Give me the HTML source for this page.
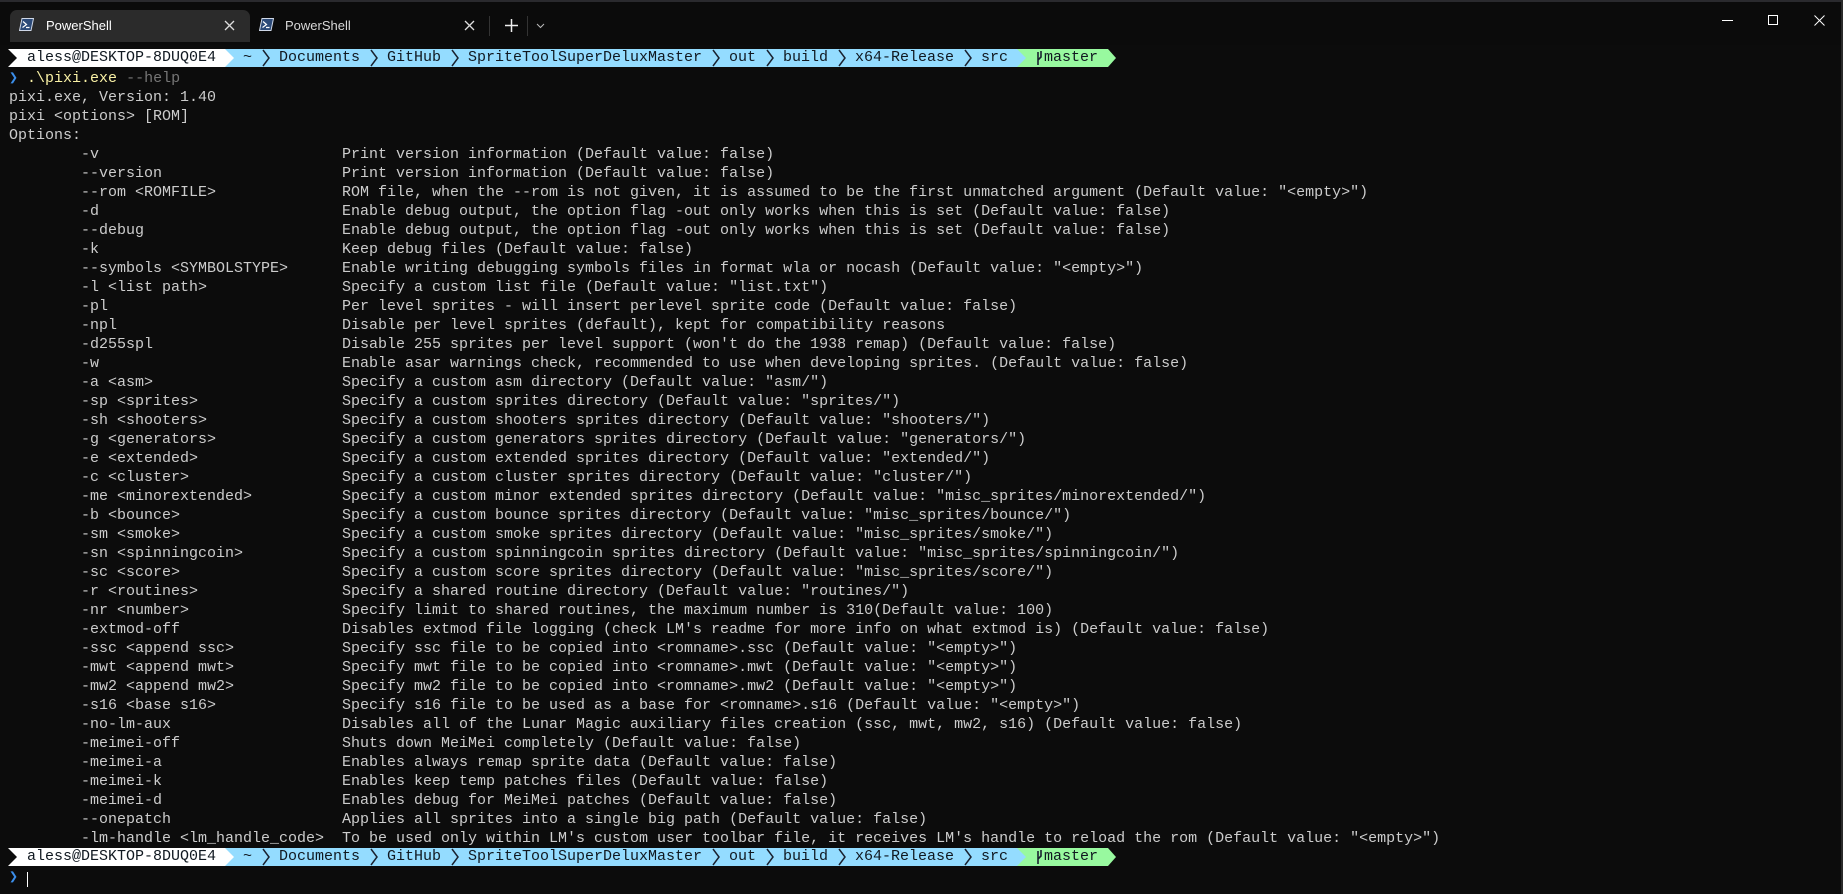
<!DOCTYPE html>
<html><head><meta charset="utf-8"><style>
*{margin:0;padding:0;box-sizing:border-box}
body{width:1843px;height:894px;background:#0c0c0c;overflow:hidden;position:relative;font-family:"Liberation Mono",monospace;font-size:15px;color:#cccccc}
.tb{position:absolute;left:0;top:0;width:1843px;height:45px;background:#0b0b0b}
.tab{position:absolute;left:10px;top:10px;width:240px;height:32px;background:#2b2b2b;border-radius:7px 7px 0 0}
.tt{position:absolute;font-family:"Liberation Sans",sans-serif;font-size:13px;color:#fff;top:18px}
.ln{position:absolute;left:9px;height:19px;line-height:19px;white-space:pre;margin-top:1px}
.o{display:inline-block;width:261px;margin-left:72px}
.bar{position:absolute;left:0;width:1843px;height:18px}
.bt{position:absolute;top:0;line-height:18px;color:#101820;white-space:pre}
</style></head><body>
<div style="position:absolute;left:0;top:0;width:1843px;height:2px;background:#2a2a2e"></div>
<div class="tb" style="top:2px;height:43px"></div>
<div class="tab"></div>
<svg style="position:absolute;left:19px;top:18px" width="15" height="13" viewBox="0 0 15 13"><path d="M3 0.5H14.5L12 12.5H0.5Z" fill="#2c4a78" stroke="#cfd8e8" stroke-width="1"/><path d="M4 3.5L7.5 6.5L3.5 9.5M7 9.5H10.5" stroke="#fff" stroke-width="1.2" fill="none"/></svg>
<div class="tt" style="left:46px">PowerShell</div>
<svg style="position:absolute;left:224px;top:20px" width="11" height="11"><path d="M1 1L10 10M10 1L1 10" stroke="#ddd" stroke-width="1.3"/></svg>
<svg style="position:absolute;left:259px;top:18px" width="15" height="13" viewBox="0 0 15 13"><path d="M3 0.5H14.5L12 12.5H0.5Z" fill="#2c4a78" stroke="#cfd8e8" stroke-width="1"/><path d="M4 3.5L7.5 6.5L3.5 9.5M7 9.5H10.5" stroke="#fff" stroke-width="1.2" fill="none"/></svg>
<div class="tt" style="left:285px;color:#d8d8d8">PowerShell</div>
<svg style="position:absolute;left:464px;top:20px" width="11" height="11"><path d="M1 1L10 10M10 1L1 10" stroke="#ddd" stroke-width="1.3"/></svg>
<div style="position:absolute;left:489px;top:16px;width:1px;height:20px;background:#333"></div>
<svg style="position:absolute;left:505px;top:19px" width="13" height="13"><path d="M6.5 0V13M0 6.5H13" stroke="#eee" stroke-width="1.5"/></svg>
<div style="position:absolute;left:527px;top:16px;width:1px;height:20px;background:#333"></div>
<svg style="position:absolute;left:536px;top:23px" width="9" height="6"><path d="M1 1L4.5 4.5L8 1" stroke="#bbb" stroke-width="1" fill="none"/></svg>
<div style="position:absolute;left:1722px;top:20px;width:11px;height:1px;background:#fff"></div>
<div style="position:absolute;left:1768px;top:15px;width:10px;height:10px;border:1px solid #fff"></div>
<svg style="position:absolute;left:1814px;top:15px" width="11" height="11"><path d="M0.5 0.5L10.5 10.5M10.5 0.5L0.5 10.5" stroke="#fff" stroke-width="1"/></svg>
<div style="position:absolute;left:1841px;top:0;width:2px;height:894px;background:#2a2a2a"></div>

<!-- prompt 1 -->
<div class="bar" style="top:49px">
<svg width="1843" height="18" style="position:absolute;left:0;top:0">
<polygon points="1017,0 1108,0 1116,9 1108,18 1017,18" fill="#98f99f"/>
<polygon points="225,0 1017,0 1026,9 1017,18 225,18" fill="#94dcff"/>
<polygon points="8,0 225,0 234,9 225,18 8,18 17,9" fill="#ffffff"/>
<g stroke="#1a2230" stroke-width="1.5" fill="none">
<polyline points="263,1 269,9 263,17"/><polyline points="371,1 377,9 371,17"/><polyline points="452,1 458,9 452,17"/><polyline points="713,1 719,9 713,17"/><polyline points="767,1 773,9 767,17"/><polyline points="839,1 845,9 839,17"/><polyline points="965,1 971,9 965,17"/>
<path d="M1038 3V16M1041 2V8L1038 11" stroke-width="1.6"/></g></svg>
<span class="bt" style="left:27px">aless@DESKTOP-8DUQ0E4</span><span class="bt" style="left:243px">~</span><span class="bt" style="left:279px">Documents</span><span class="bt" style="left:387px">GitHub</span><span class="bt" style="left:468px">SpriteToolSuperDeluxMaster</span><span class="bt" style="left:729px">out</span><span class="bt" style="left:783px">build</span><span class="bt" style="left:855px">x64-Release</span><span class="bt" style="left:981px">src</span><span class="bt" style="left:1044px">master</span>
</div>

<div class="ln" style="top:68px"><span style="color:#3b8eea">❯</span> <span style="color:#f9f1a5">.\pixi.exe</span> <span style="color:#767676">--help</span></div>
<div class="ln" style="top:87px">pixi.exe, Version: 1.40</div>
<div class="ln" style="top:106px">pixi &lt;options&gt; [ROM]</div>
<div class="ln" style="top:125px">Options:</div>
<div class="ln" style="top:144px"><span class="o">-v</span>Print version information (Default value: false)</div>
<div class="ln" style="top:163px"><span class="o">--version</span>Print version information (Default value: false)</div>
<div class="ln" style="top:182px"><span class="o">--rom &lt;ROMFILE&gt;</span>ROM file, when the --rom is not given, it is assumed to be the first unmatched argument (Default value: "&lt;empty&gt;")</div>
<div class="ln" style="top:201px"><span class="o">-d</span>Enable debug output, the option flag -out only works when this is set (Default value: false)</div>
<div class="ln" style="top:220px"><span class="o">--debug</span>Enable debug output, the option flag -out only works when this is set (Default value: false)</div>
<div class="ln" style="top:239px"><span class="o">-k</span>Keep debug files (Default value: false)</div>
<div class="ln" style="top:258px"><span class="o">--symbols &lt;SYMBOLSTYPE&gt;</span>Enable writing debugging symbols files in format wla or nocash (Default value: "&lt;empty&gt;")</div>
<div class="ln" style="top:277px"><span class="o">-l &lt;list path&gt;</span>Specify a custom list file (Default value: "list.txt")</div>
<div class="ln" style="top:296px"><span class="o">-pl</span>Per level sprites - will insert perlevel sprite code (Default value: false)</div>
<div class="ln" style="top:315px"><span class="o">-npl</span>Disable per level sprites (default), kept for compatibility reasons</div>
<div class="ln" style="top:334px"><span class="o">-d255spl</span>Disable 255 sprites per level support (won't do the 1938 remap) (Default value: false)</div>
<div class="ln" style="top:353px"><span class="o">-w</span>Enable asar warnings check, recommended to use when developing sprites. (Default value: false)</div>
<div class="ln" style="top:372px"><span class="o">-a &lt;asm&gt;</span>Specify a custom asm directory (Default value: "asm/")</div>
<div class="ln" style="top:391px"><span class="o">-sp &lt;sprites&gt;</span>Specify a custom sprites directory (Default value: "sprites/")</div>
<div class="ln" style="top:410px"><span class="o">-sh &lt;shooters&gt;</span>Specify a custom shooters sprites directory (Default value: "shooters/")</div>
<div class="ln" style="top:429px"><span class="o">-g &lt;generators&gt;</span>Specify a custom generators sprites directory (Default value: "generators/")</div>
<div class="ln" style="top:448px"><span class="o">-e &lt;extended&gt;</span>Specify a custom extended sprites directory (Default value: "extended/")</div>
<div class="ln" style="top:467px"><span class="o">-c &lt;cluster&gt;</span>Specify a custom cluster sprites directory (Default value: "cluster/")</div>
<div class="ln" style="top:486px"><span class="o">-me &lt;minorextended&gt;</span>Specify a custom minor extended sprites directory (Default value: "misc_sprites/minorextended/")</div>
<div class="ln" style="top:505px"><span class="o">-b &lt;bounce&gt;</span>Specify a custom bounce sprites directory (Default value: "misc_sprites/bounce/")</div>
<div class="ln" style="top:524px"><span class="o">-sm &lt;smoke&gt;</span>Specify a custom smoke sprites directory (Default value: "misc_sprites/smoke/")</div>
<div class="ln" style="top:543px"><span class="o">-sn &lt;spinningcoin&gt;</span>Specify a custom spinningcoin sprites directory (Default value: "misc_sprites/spinningcoin/")</div>
<div class="ln" style="top:562px"><span class="o">-sc &lt;score&gt;</span>Specify a custom score sprites directory (Default value: "misc_sprites/score/")</div>
<div class="ln" style="top:581px"><span class="o">-r &lt;routines&gt;</span>Specify a shared routine directory (Default value: "routines/")</div>
<div class="ln" style="top:600px"><span class="o">-nr &lt;number&gt;</span>Specify limit to shared routines, the maximum number is 310(Default value: 100)</div>
<div class="ln" style="top:619px"><span class="o">-extmod-off</span>Disables extmod file logging (check LM's readme for more info on what extmod is) (Default value: false)</div>
<div class="ln" style="top:638px"><span class="o">-ssc &lt;append ssc&gt;</span>Specify ssc file to be copied into &lt;romname&gt;.ssc (Default value: "&lt;empty&gt;")</div>
<div class="ln" style="top:657px"><span class="o">-mwt &lt;append mwt&gt;</span>Specify mwt file to be copied into &lt;romname&gt;.mwt (Default value: "&lt;empty&gt;")</div>
<div class="ln" style="top:676px"><span class="o">-mw2 &lt;append mw2&gt;</span>Specify mw2 file to be copied into &lt;romname&gt;.mw2 (Default value: "&lt;empty&gt;")</div>
<div class="ln" style="top:695px"><span class="o">-s16 &lt;base s16&gt;</span>Specify s16 file to be used as a base for &lt;romname&gt;.s16 (Default value: "&lt;empty&gt;")</div>
<div class="ln" style="top:714px"><span class="o">-no-lm-aux</span>Disables all of the Lunar Magic auxiliary files creation (ssc, mwt, mw2, s16) (Default value: false)</div>
<div class="ln" style="top:733px"><span class="o">-meimei-off</span>Shuts down MeiMei completely (Default value: false)</div>
<div class="ln" style="top:752px"><span class="o">-meimei-a</span>Enables always remap sprite data (Default value: false)</div>
<div class="ln" style="top:771px"><span class="o">-meimei-k</span>Enables keep temp patches files (Default value: false)</div>
<div class="ln" style="top:790px"><span class="o">-meimei-d</span>Enables debug for MeiMei patches (Default value: false)</div>
<div class="ln" style="top:809px"><span class="o">--onepatch</span>Applies all sprites into a single big path (Default value: false)</div>
<div class="ln" style="top:828px"><span class="o">-lm-handle &lt;lm_handle_code&gt;</span>To be used only within LM's custom user toolbar file, it receives LM's handle to reload the rom (Default value: "&lt;empty&gt;")</div>

<!-- prompt 2 -->
<div class="bar" style="top:848px">
<svg width="1843" height="18" style="position:absolute;left:0;top:0">
<polygon points="1017,0 1108,0 1116,9 1108,18 1017,18" fill="#98f99f"/>
<polygon points="225,0 1017,0 1026,9 1017,18 225,18" fill="#94dcff"/>
<polygon points="8,0 225,0 234,9 225,18 8,18 17,9" fill="#ffffff"/>
<g stroke="#1a2230" stroke-width="1.5" fill="none">
<polyline points="263,1 269,9 263,17"/><polyline points="371,1 377,9 371,17"/><polyline points="452,1 458,9 452,17"/><polyline points="713,1 719,9 713,17"/><polyline points="767,1 773,9 767,17"/><polyline points="839,1 845,9 839,17"/><polyline points="965,1 971,9 965,17"/>
<path d="M1038 3V16M1041 2V8L1038 11" stroke-width="1.6"/></g></svg>
<span class="bt" style="left:27px">aless@DESKTOP-8DUQ0E4</span><span class="bt" style="left:243px">~</span><span class="bt" style="left:279px">Documents</span><span class="bt" style="left:387px">GitHub</span><span class="bt" style="left:468px">SpriteToolSuperDeluxMaster</span><span class="bt" style="left:729px">out</span><span class="bt" style="left:783px">build</span><span class="bt" style="left:855px">x64-Release</span><span class="bt" style="left:981px">src</span><span class="bt" style="left:1044px">master</span>
</div>
<div class="ln" style="top:867px"><span style="color:#3b8eea">❯</span></div>
<div style="position:absolute;left:27px;top:872px;width:1px;height:15px;background:#fff"></div>
</body></html>
